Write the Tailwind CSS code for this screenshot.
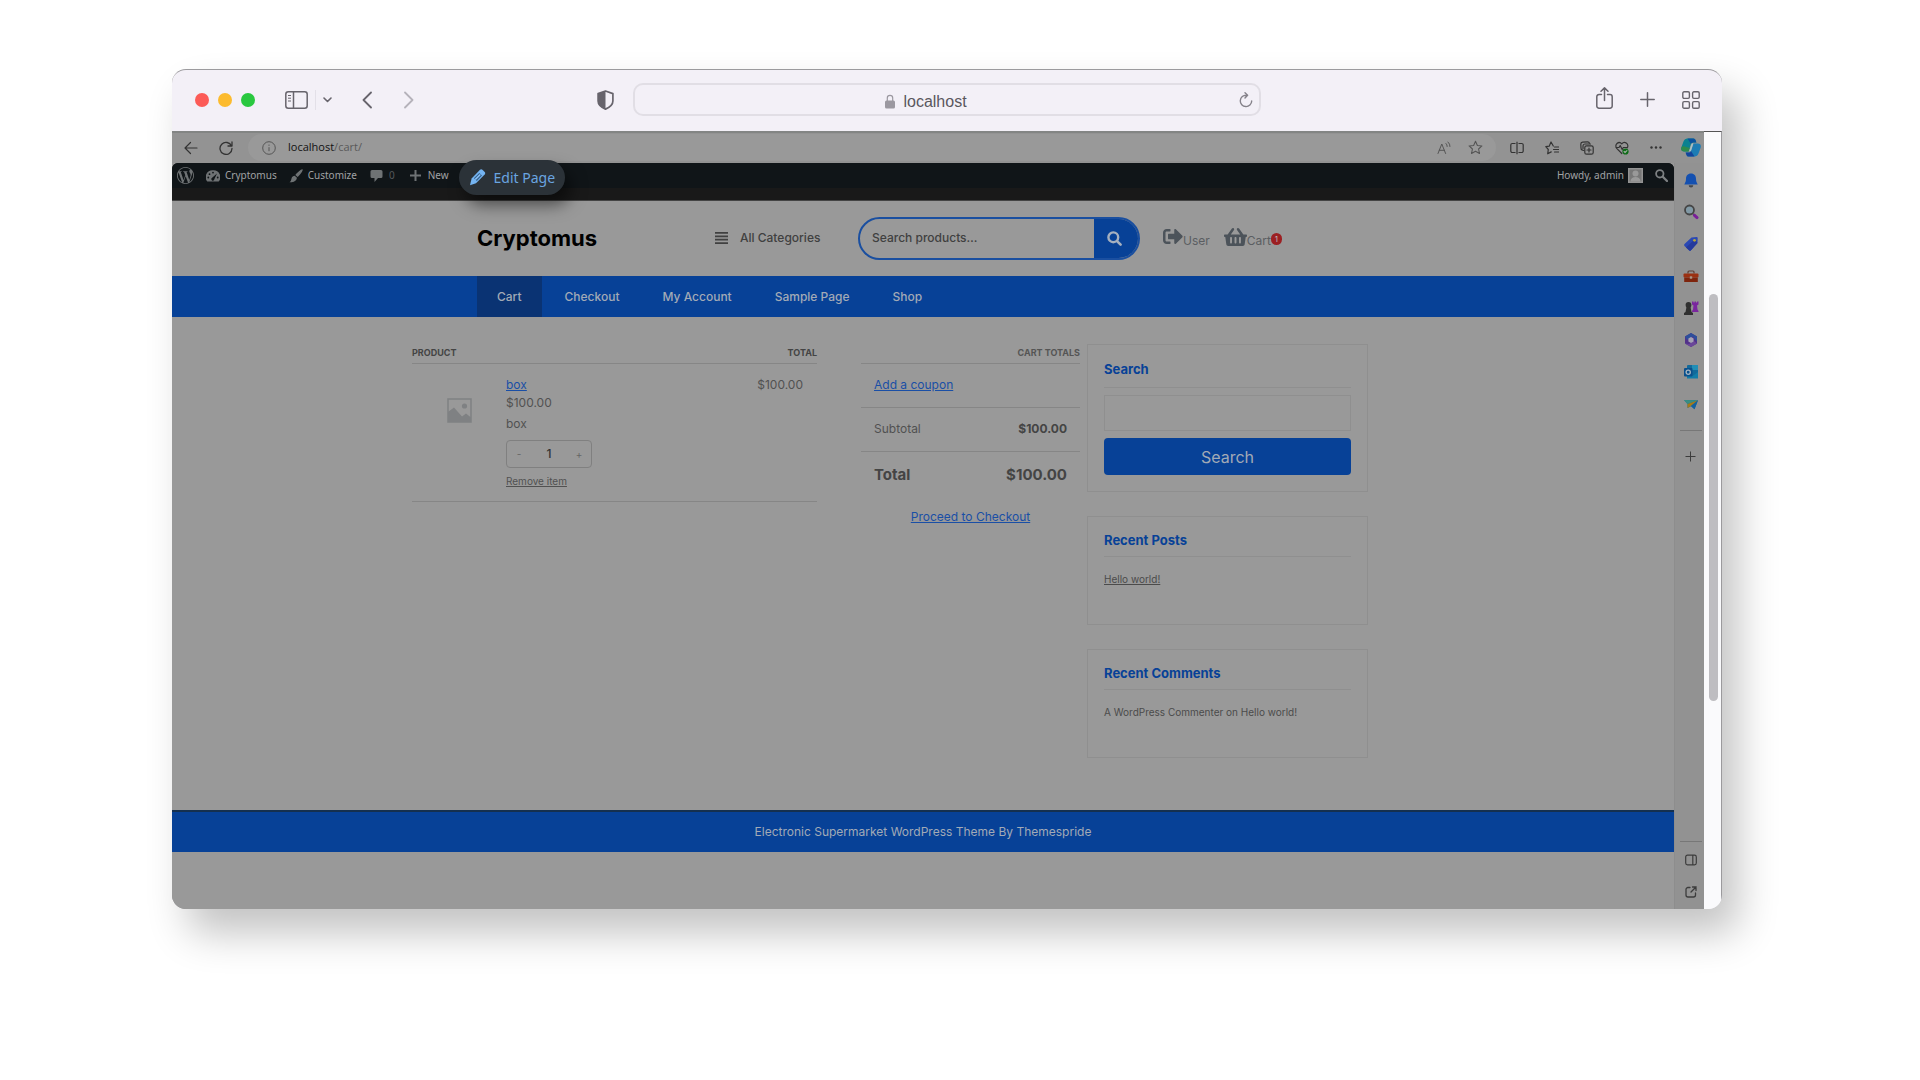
<!DOCTYPE html>
<html lang="en">
<head>
  <meta charset="UTF-8">
  <meta name="viewport" content="width=device-width, initial-scale=1.0">
  <title>Cart - Cryptomus</title>
  <script src="https://cdn.jsdelivr.net/npm/@tailwindcss/browser@4"></script>
</head>
<body class="min-h-screen bg-white pt-[69px] pr-[198px] pb-20 pl-[172px] font-['Inter','Liberation_Sans',sans-serif]">
  <div class="flex flex-col overflow-hidden rounded-[14px] border-t border-[#9b9a9d] bg-[#f3f0f7] shadow-[16px_24px_40px_rgba(0,0,0,0.24)]">

    <!-- Browser title bar -->
    <header class="flex h-[61px] items-center pr-[22px] pb-[2px] pl-[23px] text-[#67646c]">
      <div class="flex gap-[9px]">
        <span class="size-[14px] rounded-full bg-[#fc5b57]"></span>
        <span class="size-[14px] rounded-full bg-[#fcbb2e]"></span>
        <span class="size-[14px] rounded-full bg-[#29c83f]"></span>
      </div>
      <button aria-label="Sidebar" class="ml-[30px]">
        <svg class="h-[18px] w-[23px]" viewBox="0 0 23 18" fill="none" stroke="currentColor" stroke-width="1.5"><rect x=".8" y=".8" width="21.4" height="16.4" rx="2.5"/><path d="M8.5 1v16"/><path d="M3 4.5h3M3 7.2h3M3 10h3" stroke-width="1"/></svg>
      </button>
      <span class="ml-[7px] h-5 w-px bg-[#e3e0e8]"></span>
      <button aria-label="Tab groups" class="ml-[7px]">
        <svg class="h-[6px] w-[9px]" viewBox="0 0 9 6" fill="none" stroke="currentColor" stroke-width="1.6" stroke-linecap="round" stroke-linejoin="round"><path d="M1 1l3.500 3.500L8 1"/></svg>
      </button>
      <button aria-label="Back" class="ml-[30px]">
        <svg class="h-[18px] w-[10px]" viewBox="0 0 10 18" fill="none" stroke="currentColor" stroke-width="1.8" stroke-linecap="round" stroke-linejoin="round"><path d="M9 1.500L1.500 9 9 16.500"/></svg>
      </button>
      <button aria-label="Forward" class="ml-8 text-[#b5b2ba]">
        <svg class="h-[18px] w-[10px]" viewBox="0 0 10 18" fill="none" stroke="currentColor" stroke-width="1.8" stroke-linecap="round" stroke-linejoin="round"><path d="M1 1.500L8.500 9 1 16.500"/></svg>
      </button>
      <button aria-label="Privacy report" class="ml-[183px]">
        <svg class="h-5 w-[17px]" viewBox="0 0 17 20"><path d="M8.500 1L15.900 3.600V11c0 4-3.400 6.400-7.400 8.100C4.500 17.400 1.100 15 1.100 11V3.600z" fill="none" stroke="currentColor" stroke-width="1.7" stroke-linejoin="round"/><path d="M8.500 1v18C4.500 17.400 1.100 15 1.100 11V3.600z" fill="currentColor"/></svg>
      </button>
      <div class="ml-[19px] flex h-[33px] flex-1 items-center rounded-[10px] border-2 border-[#e1dee5] px-[6px]">
        <div class="flex flex-1 items-center justify-center gap-2 pt-1 pr-7">
          <svg class="h-[15px] w-[10px] text-[#9b98a0]" viewBox="0 0 10 15"><path d="M2.300 7V4a2.700 2.700 0 015.400 0v3" fill="none" stroke="currentColor" stroke-width="1.200"/><rect y="6.500" width="10" height="8" rx="1.500" fill="currentColor"/></svg>
          <span class="font-['Liberation_Sans',sans-serif] text-[16px] leading-5 text-[#5a575e]">localhost</span>
        </div>
        <button aria-label="Reload">
          <svg class="h-4 w-[14px] text-[#85828a]" viewBox="0 0 14 16" fill="none" stroke="currentColor" stroke-width="1.400" stroke-linecap="round" stroke-linejoin="round"><path d="M7.500 3.200A5.700 5.700 0 1012.700 9M6 .8l2.600 2.500L6 6"/></svg>
        </button>
      </div>
      <div class="ml-[335px] flex items-center gap-[27px]">
        <button aria-label="Share">
          <svg class="-mt-1 h-[22px] w-[17px]" viewBox="0 0 17 22" fill="none" stroke="currentColor" stroke-width="1.500" stroke-linecap="round" stroke-linejoin="round"><path d="M5.500 7.500H3A2.200 2.200 0 00.800 9.700V19A2.200 2.200 0 003 21.200h11a2.200 2.200 0 002.200-2.200V9.700A2.200 2.200 0 0014 7.500h-2.500M8.500 13.500V1M5 4.300L8.500.900 12 4.300"/></svg>
        </button>
        <button aria-label="New tab">
          <svg class="size-[15px]" viewBox="0 0 15 15" stroke="currentColor" stroke-width="1.500" stroke-linecap="round"><path d="M7.500.800v13.400M.800 7.500h13.400"/></svg>
        </button>
        <button aria-label="Tab overview">
          <svg class="size-[18px]" viewBox="0 0 18 18" fill="none" stroke="currentColor" stroke-width="1.400"><rect x=".8" y=".8" width="6.600" height="6.600" rx="1.300"/><rect x="10.600" y=".8" width="6.600" height="6.600" rx="1.300"/><rect x=".8" y="10.600" width="6.600" height="6.600" rx="1.300"/><rect x="10.600" y="10.600" width="6.600" height="6.600" rx="1.300"/></svg>
        </button>
      </div>
    </header>

    <div class="flex">
      <div class="flex min-w-0 flex-1 flex-col border-t-2 border-[#838584] bg-[#939393]">

        <!-- Edge toolbar -->
        <div class="flex h-[30px] items-center pr-[3px] pb-px pl-3 text-[#333]">
          <button aria-label="Back">
            <svg class="size-[14px]" viewBox="0 0 14 14" fill="none" stroke="currentColor" stroke-width="1.200" stroke-linecap="round" stroke-linejoin="round"><path d="M13 7H1M6.500 1.500L1 7l5.500 5.500"/></svg>
          </button>
          <button aria-label="Refresh" class="ml-[21px]">
            <svg class="size-[14px]" viewBox="0 0 14 14" fill="none" stroke="currentColor" stroke-width="1.300" stroke-linecap="round" stroke-linejoin="round"><path d="M12.500 5A6 6 0 1013 7.500M13 1v4H9"/></svg>
          </button>
          <div class="ml-[15px] flex h-[27px] flex-1 items-center rounded-full bg-[#999] pr-[13px] pl-[14px]">
            <svg class="size-[14px] text-[#555]" viewBox="0 0 14 14" fill="none" stroke="currentColor"><circle cx="7" cy="7" r="6.300"/><path d="M7 6.200v4M7 3.600v1.200"/></svg>
            <span class="ml-3 flex-1 font-['Open_Sans','Noto_Sans',sans-serif] text-[11px] text-[#5a5a5a]"><span class="text-[#111]">localhost</span>/cart/</span>
            <svg class="size-[14px] text-[#555]" viewBox="0 0 14 14" fill="none" stroke="currentColor" stroke-linecap="round"><path d="M1 12.500L4.800 3l3.800 9.500M2.300 9.300h5M9 2.500q1.400 1.300 1.200 3M11 1q2.200 2 2 4.500"/></svg>
            <svg class="ml-[17px] size-[15px] text-[#555]" viewBox="0 0 24 24" fill="none" stroke="currentColor" stroke-width="1.700" stroke-linejoin="round"><path d="M12 2l3 6.700 7.300.800-5.400 4.900 1.500 7.200L12 18l-6.400 3.600 1.500-7.200L1.700 9.500 9 8.700z"/></svg>
          </div>
          <div class="ml-[14px] flex items-center gap-[21px]">
            <svg class="size-[14px]" viewBox="0 0 14 14" fill="none" stroke="currentColor" stroke-width="1.200"><path d="M5.500 2.500H2.300A1.500 1.500 0 00.800 4v6a1.500 1.500 0 001.500 1.500h3.200M8.500 2.500h3.200A1.500 1.500 0 0113.200 4v6a1.500 1.500 0 01-1.500 1.500H8.500M7 .800v12.400"/></svg>
            <svg class="size-[14px]" viewBox="0 0 14 14" fill="none" stroke="currentColor" stroke-width="1.200" stroke-linecap="round" stroke-linejoin="round"><path d="M8.300 5L6 1 4.200 5.200.800 5.700l2.500 2.800-.600 4.300 3.500-1.900M9.500 6h4M8.500 8.500h5M9.500 11h4"/></svg>
            <svg class="size-[14px]" viewBox="0 0 14 14" fill="none" stroke="currentColor" stroke-width="1.200" stroke-linecap="round"><path d="M3.800 9.500L2.600 9.200A2 2 0 011 7L.800 3.200A2 2 0 012.500 1.200l5-.400a2 2 0 012 1.400"/><rect x="4.800" y="4.800" width="8.400" height="8.400" rx="1.800"/><path d="M3 7.500V5a2 2 0 012-2h5.500M9 7v4M7 9h4"/></svg>
            <svg class="size-[14px]" viewBox="0 0 14 14" fill="none" stroke="currentColor" stroke-width="1.200" stroke-linecap="round" stroke-linejoin="round"><path d="M6.800 12.500L1.700 7.300A3.300 3.300 0 016.800 2.800a3.300 3.300 0 015.300 4.200M1 6.500h3l1.200-2 2 4L8.300 6.500h4"/><circle cx="10.500" cy="10.500" r="3.100" fill="#0c6b16" stroke="none"/><path d="M9.100 10.500l1 1 1.800-1.900" stroke="#9a9"/></svg>
            <svg class="h-[3px] w-3" viewBox="0 0 12 3" fill="currentColor"><circle cx="1.500" cy="1.500" r="1.200"/><circle cx="6" cy="1.500" r="1.200"/><circle cx="10.500" cy="1.500" r="1.200"/></svg>
            <svg class="-ml-[2px] h-[19px] w-5" viewBox="0 0 20 19"><path d="M6.500.500h6q1.500 0 2 1.500l.900 2.500H12q-1.500 0-2 1.500L7.500 13.500H3.300Q-.500 13.500.300 9.500L2.500 3.500Q3.600.500 6.500.500z" fill="#0b8190"/><path d="M6.500.500h6q1.500 0 2 1.500l.900 2.500H12q-1.500 0-2 1.500z" fill="#0a52a0"/><path d="M.300 9.500Q-.500 13.500 3.300 13.500H7.500L8.700 10 2 8z" fill="#2f8a4c"/><path d="M13.500 18.500h-6q-1.500 0-2-1.500l-.900-2.500H8q1.500 0 2-1.500l2.500-7.500h4.200q3.800 0 3 4l-2.200 6q-1.100 3-4 3z" fill="#1c7cb4"/><path d="M13.500 18.500h-6q-1.500 0-2-1.500l-.900-2.500H8q1.500 0 2-1.500z" fill="#13459b"/><path d="M8.300 13l2.400-7.500h1.600L9.900 13z" fill="#a6c3c8"/></svg>
          </div>
        </div>

        <div class="flex">
          <!-- Site -->
          <div class="flex min-w-0 flex-1 flex-col bg-[#999] text-[#4b4b4b]">

            <!-- Admin bar -->
            <div class="rounded-t-md border-b border-[#444] bg-[#191919]">
              <nav class="flex h-[25px] items-center rounded-t-md bg-[#101518] pr-[6px] pl-[5px] font-['Noto_Sans','Open_Sans',sans-serif] text-[10px] text-[#a0a2a4]">
                <a href="#" aria-label="WordPress"><svg class="size-[17px] text-[#6e7274]" viewBox="0 0 24 24" fill="currentColor"><path d="M21.469 6.825c.84 1.537 1.318 3.3 1.318 5.175 0 3.979-2.156 7.456-5.363 9.325l3.295-9.527c.615-1.54.82-2.771.82-3.864 0-.405-.026-.78-.07-1.11m-7.981.105c.647-.03 1.232-.105 1.232-.105.582-.075.514-.93-.067-.899 0 0-1.755.135-2.88.135-1.064 0-2.85-.15-2.85-.15-.585-.03-.661.855-.075.885 0 0 .54.061 1.125.09l1.68 4.605-2.37 7.08L5.354 6.9c.649-.03 1.234-.1 1.234-.1.585-.075.516-.93-.065-.896 0 0-1.746.138-2.874.138-.2 0-.438-.008-.69-.015C4.911 3.15 8.235 1.215 12 1.215c2.809 0 5.365 1.072 7.286 2.833-.046-.003-.091-.009-.141-.009-1.06 0-1.812.923-1.812 1.914 0 .89.513 1.643 1.06 2.531.411.72.89 1.643.89 2.977 0 .915-.354 1.994-.821 3.479l-1.075 3.585-3.9-11.61.001.014zM12 22.784c-1.059 0-2.081-.153-3.048-.437l3.237-9.406 3.315 9.087c.024.053.05.101.078.149-1.12.393-2.325.609-3.582.609M1.211 12c0-1.564.336-3.05.935-4.39L7.29 21.709C3.694 19.96 1.212 16.271 1.211 12M12 0C5.385 0 0 5.385 0 12s5.385 12 12 12 12-5.385 12-12S18.615 0 12 0"/></svg></a>
                <a href="#" class="ml-3 flex items-center gap-[5px]">
                  <svg class="h-3 w-[14px] text-[#6e7274]" viewBox="0 0 14 12"><path d="M7 .300A6.800 6.800 0 001.300 11.500h11.400A6.800 6.800 0 007 .300z" fill="currentColor"/><g fill="#101518"><circle cx="7" cy="2.600" r=".9"/><circle cx="3.500" cy="4.200" r=".9"/><circle cx="2.300" cy="7.500" r=".9"/><circle cx="11.700" cy="7.500" r=".9"/><path d="M11 3.500L8.300 9.200a1.500 1.500 0 11-2.200-1.400z"/></g></svg>
                  Cryptomus</a>
                <a href="#" class="ml-3 flex items-center gap-[5px]">
                  <svg class="size-[14px] text-[#6e7274]" viewBox="0 0 14 14" fill="currentColor"><path d="M13.600.400c.800.900-2.500 5.500-5 7.700L6.300 6C8.500 3.400 12.700-.500 13.600.400zM5.700 6.700l2.200 2c-.200 3.200-3.500 4.800-7.400 4.500 1.500-1 1.500-2.200 2-3.800.500-1.700 1.700-2.700 3.200-2.700z"/></svg>
                  Customize</a>
                <a href="#" class="ml-[13px] flex items-center gap-[6px] text-[#55595b]">
                  <svg class="h-3 w-[13px] text-[#6e7274]" viewBox="0 0 13 12" fill="currentColor"><path d="M2 0h9a1.500 1.500 0 011.500 1.500v5A1.500 1.500 0 0111 8H8l-3.500 4V8H2A1.500 1.500 0 01.500 6.500v-5A1.500 1.500 0 012 0z"/></svg>
                  0</a>
                <a href="#" class="ml-[15px] flex items-center gap-[7px]">
                  <svg class="size-[11px] text-[#6e7274]" viewBox="0 0 11 11" fill="currentColor"><path d="M4.500 0h2v4.500H11v2H6.500V11h-2V6.500H0v-2h4.500z"/></svg>
                  New</a>
                <div class="relative flex-1">
                  <a href="#" class="absolute -top-4 left-[10px] flex h-[35px] items-center gap-2 rounded-full bg-[#2b3238] px-[10px] text-[14px] whitespace-nowrap text-[#6aa5e0] shadow-[6px_10px_16px_rgba(0,0,0,0.5)]">
                    <svg class="size-[17px]" viewBox="0 0 17 17"><path d="M11 .800q1.200-1 2.400 0l2.300 2.300q1 1.200 0 2.400L7 14.300l-6 2 1.600-6.700z" fill="#74b4f2"/><path d="M10.300 4l2.700 2.600-5.200 5.300-2.900-2.700z" fill="#35618c"/><path d="M10.800 4.900l1 1-5 5-1.100-1z" fill="#8cc4fa"/></svg>
                    Edit Page</a>
                </div>
                <a href="#" class="flex items-center gap-1">Howdy, admin
                  <svg class="size-[15px]" viewBox="0 0 15 15"><rect width="15" height="15" fill="#939393"/><rect x="1.500" y="1.500" width="12" height="12" fill="#777"/><circle cx="7.500" cy="5.500" r="3" fill="#999"/><path d="M2.500 13.500c0-3 2-4.500 5-4.500s5 1.500 5 4.500z" fill="#999"/></svg>
                </a>
                <button aria-label="Search site" class="ml-3">
                  <svg class="size-[13px] text-[#7d8082]" viewBox="0 0 13 13" fill="none" stroke="currentColor"><circle cx="4.800" cy="4.800" r="3.700" stroke-width="1.800"/><path d="M7.800 7.800l4.200 4.200" stroke-width="2.300" stroke-linecap="round"/></svg>
                </button>
              </nav>
              <div class="h-3"></div>
            </div>

            <!-- Store header -->
            <div class="flex h-[75px] items-center pr-[305px] pb-px pl-[305px]">
              <a href="#" class="w-[238px] text-[22px] font-bold text-black">Cryptomus</a>
              <button class="flex w-[143px] items-center gap-3 text-[12px] font-medium whitespace-nowrap text-[#404040]">
                <svg class="h-3 w-[13px]" viewBox="0 0 13 12" fill="currentColor"><path d="M0 0h13v1.800H0zM0 3.400h13v1.800H0zM0 6.800h13v1.800H0zM0 10.200h13V12H0z"/></svg>
                All Categories
              </button>
              <form class="flex h-[43px] flex-1 overflow-hidden rounded-full border-2 border-[#1a4fa0]">
                <input type="search" aria-label="Search products" placeholder="Search products…" class="min-w-0 flex-1 pl-3 text-[12px] font-medium outline-none placeholder:text-[#404040]">
                <button type="button" aria-label="Search" class="flex w-11 items-center justify-center bg-[#074197] pr-1">
                  <svg class="size-[15px] text-[#a5b0bf]" viewBox="0 0 15 15" fill="none" stroke="currentColor" stroke-linecap="round"><circle cx="6.300" cy="6.300" r="4.900" stroke-width="2.400"/><path d="M10.300 10.300l3.300 3.300" stroke-width="2.600"/></svg>
                </button>
              </form>
              <div class="ml-[23px] flex w-[206px] items-end text-[12px] leading-4 text-[#5b5e62]">
                <a href="#" class="flex items-end">
                  <svg class="mb-[3px] h-[19px] w-5 text-[#4c535a]" viewBox="0 32 512 448" fill="currentColor"><path d="M497 273L329 441c-15 15-41 4.500-41-17v-96H152c-13.300 0-24-10.700-24-24v-96c0-13.300 10.700-24 24-24h136V88c0-21.400 25.900-32 41-17l168 168c9.300 9.400 9.300 24.600 0 34zM192 436v-40c0-6.600-5.400-12-12-12H96c-17.700 0-32-14.300-32-32V160c0-17.700 14.300-32 32-32h84c6.600 0 12-5.400 12-12V76c0-6.600-5.400-12-12-12H96c-53 0-96 43-96 96v192c0 53 43 96 96 96h84c6.600 0 12-5.400 12-12z"/></svg>User</a>
                <a href="#" class="ml-[14px] flex items-end">
                  <svg class="mb-[2px] h-5 w-[23px] text-[#4c535a]" viewBox="0 16 576 480" fill="currentColor"><path d="M576 216v16c0 13.255-10.745 24-24 24h-8l-26.113 182.788C514.509 462.435 494.257 480 470.370 480H105.630c-23.887 0-44.139-17.565-47.518-41.212L32 256h-8c-13.255 0-24-10.745-24-24v-16c0-13.255 10.745-24 24-24h67.341l106.780-146.821c10.395-14.292 30.407-17.453 44.701-7.058 14.293 10.395 17.453 30.408 7.058 44.701L170.477 192h235.046L326.120 82.821c-10.395-14.292-7.234-34.306 7.059-44.701 14.291-10.395 34.306-7.235 44.701 7.058L484.659 192H552c13.255 0 24 10.745 24 24zM312 392V280c0-13.255-10.745-24-24-24s-24 10.745-24 24v112c0 13.255 10.745 24 24 24s24-10.745 24-24zm112 0V280c0-13.255-10.745-24-24-24s-24 10.745-24 24v112c0 13.255 10.745 24 24 24s24-10.745 24-24zm-224 0V280c0-13.255-10.745-24-24-24s-24 10.745-24 24v112c0 13.255 10.745 24 24 24s24-10.745 24-24z"/></svg>Cart
                  <span class="mb-1 flex h-3 w-[11px] items-center justify-center rounded-full bg-[#9c1f22] text-[8px] text-[#bbb]">1</span>
                </a>
              </div>
            </div>

            <!-- Main menu -->
            <nav class="flex h-[41px] gap-[3px] bg-[#074197] pl-[305px] text-[12px] font-medium text-[#a2aab6]">
              <a href="#" class="flex items-center bg-[#0a3373] px-5">Cart</a>
              <a href="#" class="flex items-center px-5">Checkout</a>
              <a href="#" class="flex items-center px-5">My Account</a>
              <a href="#" class="flex items-center px-5">Sample Page</a>
              <a href="#" class="flex items-center px-5">Shop</a>
            </nav>

            <main class="grid grid-cols-[449fr_226fr_281fr] items-start pt-[27px] pr-[306px] pb-[52px] pl-[240px]">
              <!-- Cart items -->
              <div class="pr-11">
                <table class="w-full text-[12px] text-[#515151]">
                  <thead class="border-b border-[#868686] text-[9px] leading-[18px] text-[#444]">
                    <tr><th colspan="2" class="pb-px text-left font-bold">PRODUCT</th><th class="pb-px text-right font-bold">TOTAL</th></tr>
                  </thead>
                  <tbody class="border-b border-[#868686]">
                    <tr class="align-top">
                      <td class="w-[94px] pt-[34px] pl-[35px]">
                        <svg class="size-[25px]" viewBox="0 0 25 25"><rect x="1" y="1" width="23" height="23" fill="#999" stroke="#7f8183" stroke-width="1.500"/><circle cx="17.500" cy="8" r="2.600" fill="#7f8183"/><path d="M1 14l6-4.500 8 9 4-3 5 4V24H1z" fill="#7f8183"/></svg>
                      </td>
                      <td class="pt-3 pb-3">
                        <a href="#" class="block leading-[18px] text-[#1a4fa6] underline">box</a>
                        <p class="leading-[18px]">$100.00</p>
                        <p class="mt-[3px] leading-[18px]">box</p>
                        <div class="mt-[7px] flex h-7 w-[86px] items-center justify-between rounded-sm border border-[#808080] px-2 text-[10px]">
                          <button aria-label="Reduce quantity" class="w-2 text-[#666]">-</button>
                          <input type="text" aria-label="Quantity" value="1" class="w-8 text-center text-[12px] font-medium text-[#333] outline-none">
                          <button aria-label="Increase quantity" class="w-2 text-[#666]">+</button>
                        </div>
                        <a href="#" class="mt-[5px] block text-[10px] leading-4 underline">Remove item</a>
                      </td>
                      <td class="pt-3 pr-[14px] text-right leading-[18px]">$100.00</td>
                    </tr>
                  </tbody>
                </table>
              </div>

              <!-- Cart totals -->
              <section class="pr-[7px] text-[12px] text-[#515151]">
                <h2 class="border-b border-[#868686] pb-px text-right text-[9px] leading-[18px] font-bold text-[#555]">CART TOTALS</h2>
                <div class="border-b border-[#868686] px-[13px] pt-[11px] pb-3"><a href="#" class="block leading-5 text-[#1a4fa6] underline">Add a coupon</a></div>
                <div class="flex justify-between border-b border-[#868686] px-[13px] pt-[11px] pb-3 leading-5"><span>Subtotal</span><span class="font-bold text-[#444]">$100.00</span></div>
                <div class="flex justify-between px-[13px] pt-[11px] text-[15px] leading-6 font-bold text-[#444]"><span>Total</span><span>$100.00</span></div>
                <p class="mt-5 text-center leading-5"><a href="#" class="text-[#1a4fa6] underline">Proceed to Checkout</a></p>
              </section>

              <!-- Widgets -->
              <aside class="flex flex-col gap-6 text-[10px]">
                <section class="border border-[#8f8f8f] p-4">
                  <h2 class="border-b border-[#8f8f8f] pb-[10px] text-[13px] leading-4 font-bold text-[#074197]">Search</h2>
                  <input type="text" aria-label="Search" class="mt-[7px] block h-9 w-full border border-[#8f8f8f] px-2 outline-none">
                  <button class="mt-[7px] block h-[37px] w-full rounded-sm bg-[#074197] text-[16px] text-[#a2aab6]">Search</button>
                </section>
                <section class="border border-[#8f8f8f] px-4 pt-[15px] pb-[37px]">
                  <h2 class="border-b border-[#8f8f8f] pb-2 text-[13px] leading-4 font-bold text-[#074197]">Recent Posts</h2>
                  <a href="#" class="mt-[14px] block leading-4 underline">Hello world!</a>
                </section>
                <section class="border border-[#8f8f8f] px-4 pt-[15px] pb-[37px]">
                  <h2 class="border-b border-[#8f8f8f] pb-2 text-[13px] leading-4 font-bold text-[#074197]">Recent Comments</h2>
                  <p class="mt-[14px] leading-4"><a href="#">A WordPress Commenter</a> on <a href="#">Hello world!</a></p>
                </section>
              </aside>
            </main>

            <footer class="flex h-[42px] items-center justify-center border-t-2 border-[#15304f] bg-[#074197] text-[12px] text-[#a2aab6]">Electronic Supermarket WordPress Theme By Themespride</footer>
            <div class="h-[57px]"></div>
          </div>

          <!-- Edge sidebar -->
          <aside class="flex w-[30px] flex-col items-center border-l border-[#8d8d8d] bg-[#929292] pt-[9px] pr-[2px] pb-2 pl-1 text-[#3c3c3c]">
            <div class="flex flex-col items-center gap-4">
              <svg class="size-4" viewBox="0 0 16 16"><path d="M8 1.500c3.300 0 5 2.300 5 5.300 0 2.500.600 3.500 1.700 5.700H1.300C2.400 10.300 3 9.300 3 6.800c0-3 1.700-5.300 5-5.300z" fill="#1450b0"/><path d="M5.700 13.200h4.600a2.300 2.300 0 01-4.600 0z" fill="#42474f"/></svg>
              <svg class="size-4" viewBox="0 0 16 16"><circle cx="6.500" cy="6" r="4.500" fill="#8199a5" stroke="#454545" stroke-width="1.800"/><path d="M10 9.800l1.800 1.700" stroke="#555" stroke-width="2"/><path d="M11.500 11.300l2.500 2.300" stroke="#7a1f9a" stroke-width="3" stroke-linecap="round"/></svg>
              <svg class="size-4" viewBox="0 0 16 16"><path d="M8.500 1.500L13.500 1q1.300 0 1.200 1.300L14.500 7 8 14.200q-1 1-2 0L1.500 10q-1-1 0-2z" fill="#2a48b4"/><path d="M3 11.400L12 3l2.500 4L8 14.200q-1 1-2 0z" fill="#253a9c"/><circle cx="11.500" cy="4.300" r="1.400" fill="#b5a53c"/></svg>
              <svg class="size-4" viewBox="0 0 16 16"><path d="M5 5.500V4q0-1 1-1h4q1 0 1 1v1.500" fill="none" stroke="#5e3d33" stroke-width="1.200"/><rect x=".5" y="5.500" width="15" height="4" rx="1" fill="#9b3113"/><path d="M1.200 9.500h13.600V14H1.200z" fill="#7e240d"/><rect x="6.800" y="8.300" width="2.400" height="2.400" fill="#a8998a"/></svg>
              <svg class="size-4" viewBox="0 0 16 16"><circle cx="5.500" cy="5" r="2.900" fill="#303030"/><path d="M3.500 7h4l1 5 1.500 1v2H1v-2l1.500-1z" fill="#303030"/><path d="M9 1.500h1.500v1h1v-1h1.500v1h1v-1h1.500v3l-1.500 1 .500 4 1 1.500v1H9v-1l1-1.500.500-4-1.500-1z" fill="#7a279e"/></svg>
              <svg class="size-4" viewBox="0 0 16 16"><path d="M8 1l6 3.500v7L8 15l-6-3.500v-7z" fill="#523289"/><path d="M8 1l6 3.500v5L9.500 4.500 4 8 2 4.500z" fill="#2d4f9b"/><path d="M2 11.500L8 15l6-3.500L11 9l-5 3z" fill="#6a4699"/><path d="M8 5l2.600 1.500v3L8 11 5.400 9.500v-3z" fill="#a5a3b5"/></svg>
              <svg class="size-4" viewBox="0 0 16 16"><rect x="4" y="1" width="11" height="13" rx="1" fill="#126a9b"/><path d="M9 1h6v5H9z" fill="#218eb6"/><path d="M4 9l5.500 3L15 8v6.500H4z" fill="#127ca8"/><rect x="1" y="4" width="8.500" height="8.500" rx="1" fill="#0b508c"/><circle cx="5.200" cy="8.200" r="2.100" fill="none" stroke="#a8b6c1" stroke-width="1.300"/></svg>
              <svg class="size-4" viewBox="0 0 16 16"><path d="M1 4l14 .300-3.500 9-3.500-3-3.500 1.700V8z" fill="#14719c"/><path d="M1 4l14 .300L4.500 8z" fill="#398d83"/><path d="M15 4.300L4.500 8v4L8 10z" fill="#a77a17"/><path d="M15 4.300L8 10l3.500 3.300z" fill="#15619e"/></svg>
            </div>
            <span class="mt-[18px] h-px w-[22px] bg-[#777]"></span>
            <button aria-label="Customize sidebar" class="mt-5"><svg class="size-[11px]" viewBox="0 0 11 11" stroke="currentColor"><path d="M5.500.500v10M.500 5.500h10"/></svg></button>
            <span class="mt-auto h-px w-[22px] bg-[#777]"></span>
            <button aria-label="Hide sidebar" class="mt-3"><svg class="size-3" viewBox="0 0 12 12" fill="none" stroke="currentColor" stroke-width="1.200"><rect x=".7" y="1.200" width="10.600" height="9.600" rx="1.800"/><path d="M7.800 1v10"/></svg></button>
            <button aria-label="Open link" class="mt-5 mb-[3px]"><svg class="size-3" viewBox="0 0 12 12" fill="none" stroke="currentColor" stroke-width="1.300" stroke-linecap="round"><path d="M5 1.500H3A2 2 0 001 3.500V9a2 2 0 002 2h5.500a2 2 0 002-2V7M7.500 1H11v3.500M11 1L6 6"/></svg></button>
          </aside>
        </div>
      </div>

      <!-- Scrollbar -->
      <div class="w-[18px] border-t border-r border-t-[#555] border-r-[#9b9a9d] bg-[#fafafc] pt-[162px] pr-[3px] pl-[5px]">
        <div class="h-[407px] rounded-full bg-[#bebdc1]"></div>
      </div>
    </div>
  </div>
</body>
</html>
